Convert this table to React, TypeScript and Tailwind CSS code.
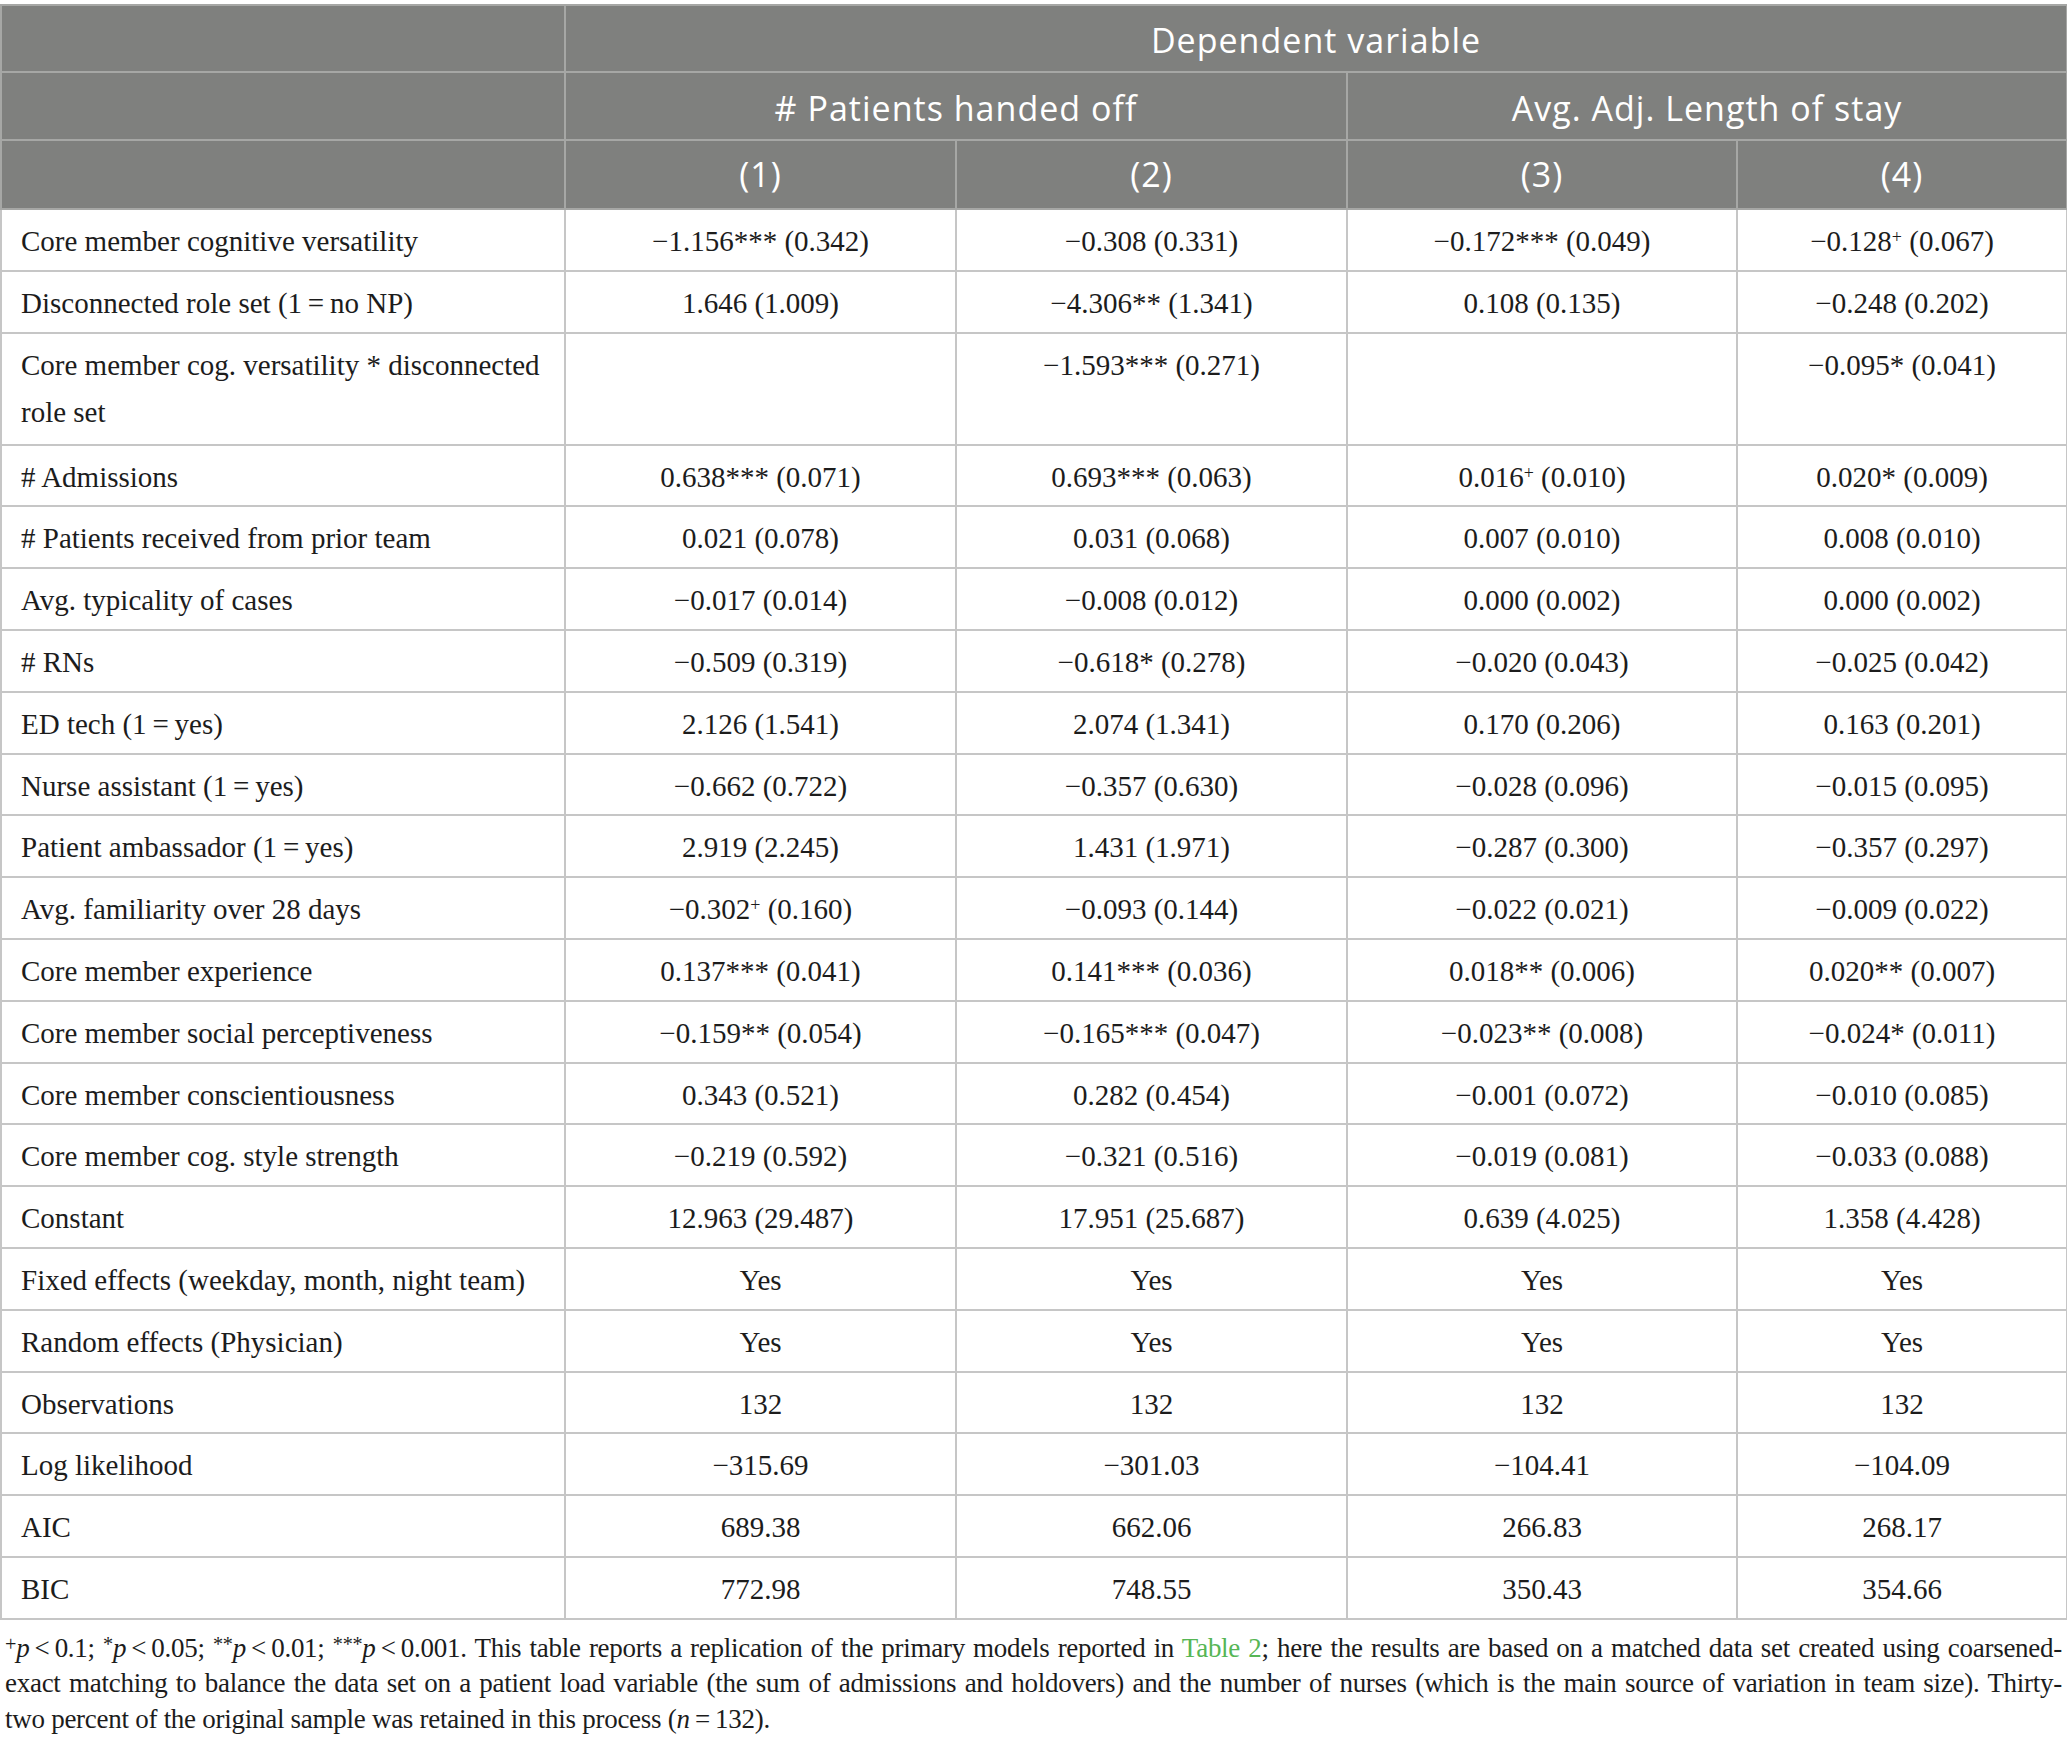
import React from "react";

const M = "\u2212";
const T = "\u2009";

type Cell = React.ReactNode;

const Plus = () => (
  <sup className="relative top-[-0.45em] align-baseline text-[0.62em]">+</sup>
);

const rows: { label: Cell; cells: Cell[]; tall?: boolean }[] = [
  { label: "Core member cognitive versatility", cells: [`${M}1.156*** (0.342)`, `${M}0.308 (0.331)`, `${M}0.172*** (0.049)`, <>{M}0.128<Plus /> (0.067)</>] },
  { label: <>Disconnected role set (1{T}={T}no NP)</>, cells: ["1.646 (1.009)", `${M}4.306** (1.341)`, "0.108 (0.135)", `${M}0.248 (0.202)`] },
  { label: "Core member cog. versatility * disconnected role set", cells: ["", `${M}1.593*** (0.271)`, "", `${M}0.095* (0.041)`], tall: true },
  { label: "# Admissions", cells: ["0.638*** (0.071)", "0.693*** (0.063)", <>0.016<Plus /> (0.010)</>, "0.020* (0.009)"] },
  { label: "# Patients received from prior team", cells: ["0.021 (0.078)", "0.031 (0.068)", "0.007 (0.010)", "0.008 (0.010)"] },
  { label: "Avg. typicality of cases", cells: [`${M}0.017 (0.014)`, `${M}0.008 (0.012)`, "0.000 (0.002)", "0.000 (0.002)"] },
  { label: "# RNs", cells: [`${M}0.509 (0.319)`, `${M}0.618* (0.278)`, `${M}0.020 (0.043)`, `${M}0.025 (0.042)`] },
  { label: <>ED tech (1{T}={T}yes)</>, cells: ["2.126 (1.541)", "2.074 (1.341)", "0.170 (0.206)", "0.163 (0.201)"] },
  { label: <>Nurse assistant (1{T}={T}yes)</>, cells: [`${M}0.662 (0.722)`, `${M}0.357 (0.630)`, `${M}0.028 (0.096)`, `${M}0.015 (0.095)`] },
  { label: <>Patient ambassador (1{T}={T}yes)</>, cells: ["2.919 (2.245)", "1.431 (1.971)", `${M}0.287 (0.300)`, `${M}0.357 (0.297)`] },
  { label: "Avg. familiarity over 28 days", cells: [<>{M}0.302<Plus /> (0.160)</>, `${M}0.093 (0.144)`, `${M}0.022 (0.021)`, `${M}0.009 (0.022)`] },
  { label: "Core member experience", cells: ["0.137*** (0.041)", "0.141*** (0.036)", "0.018** (0.006)", "0.020** (0.007)"] },
  { label: "Core member social perceptiveness", cells: [`${M}0.159** (0.054)`, `${M}0.165*** (0.047)`, `${M}0.023** (0.008)`, `${M}0.024* (0.011)`] },
  { label: "Core member conscientiousness", cells: ["0.343 (0.521)", "0.282 (0.454)", `${M}0.001 (0.072)`, `${M}0.010 (0.085)`] },
  { label: "Core member cog. style strength", cells: [`${M}0.219 (0.592)`, `${M}0.321 (0.516)`, `${M}0.019 (0.081)`, `${M}0.033 (0.088)`] },
  { label: "Constant", cells: ["12.963 (29.487)", "17.951 (25.687)", "0.639 (4.025)", "1.358 (4.428)"] },
  { label: "Fixed effects (weekday, month, night team)", cells: ["Yes", "Yes", "Yes", "Yes"] },
  { label: "Random effects (Physician)", cells: ["Yes", "Yes", "Yes", "Yes"] },
  { label: "Observations", cells: ["132", "132", "132", "132"] },
  { label: "Log likelihood", cells: [`${M}315.69`, `${M}301.03`, `${M}104.41`, `${M}104.09`] },
  { label: "AIC", cells: ["689.38", "662.06", "266.83", "268.17"] },
  { label: "BIC", cells: ["772.98", "748.55", "350.43", "354.66"] },
];

const P = () => <i>p</i>;
const Sp = ({ c }: { c: string }) => (
  <sup className="relative top-[-0.3em] align-baseline text-[0.75em]">{c}</sup>
);

export default function App() {
  const th =
    "border-2 border-[#a6a7a5] bg-[#7f807e] text-white font-normal text-center align-middle";
  const td =
    "border-2 border-[#c6c6c6] align-top pt-[8px] pb-[4px] leading-[47.8px] text-center";
  return (
    <div className="w-[2067px] bg-white pt-[4px]" style={{ fontFamily: '"Liberation Serif", serif' }}>
      <table className="w-[2066px] table-fixed border-collapse text-[#1c1c1c] text-[29px]">
        <colgroup>
          <col className="w-[564px]" />
          <col className="w-[391px]" />
          <col className="w-[391px]" />
          <col className="w-[390px]" />
          <col className="w-[330px]" />
        </colgroup>
        <thead className="font-['Open_Sans',sans-serif] text-[34px] tracking-[0.03em]">
          <tr className="h-[67px]">
            <th className={th}></th>
            <th className={`${th} pt-[4px]`} colSpan={4}>
              Dependent variable
            </th>
          </tr>
          <tr className="h-[68px]">
            <th className={th}></th>
            <th className={`${th} pt-[4px]`} colSpan={2}>
              # Patients handed off
            </th>
            <th className={`${th} pt-[4px]`} colSpan={2}>
              Avg. Adj. Length of stay
            </th>
          </tr>
          <tr className="h-[69px]">
            <th className={th}></th>
            <th className={th}>(1)</th>
            <th className={th}>(2)</th>
            <th className={th}>(3)</th>
            <th className={th}>(4)</th>
          </tr>
        </thead>
        <tbody>
          {rows.map((r, i) => (
            <tr key={i} className={r.tall ? "h-[112px]" : "h-[61.8px]"}>
              <td className={`${td} !text-left pl-[19px] pr-[12px]`}>{r.label}</td>
              {r.cells.map((c, j) => (
                <td key={j} className={td}>
                  {c}
                </td>
              ))}
            </tr>
          ))}
        </tbody>
      </table>
      <div className="mt-[11px] px-[5px] text-[27px] tracking-[-0.01em] leading-[35.5px] text-[#1c1c1c]">
        <div className="whitespace-nowrap text-justify [text-align-last:justify]">
          <Sp c="+" />
          <P />{T}&lt;{T}0.1; <Sp c="*" />
          <P />{T}&lt;{T}0.05; <Sp c="**" />
          <P />{T}&lt;{T}0.01; <Sp c="***" />
          <P />{T}&lt;{T}0.001. This table reports a replication of the primary models reported in{" "}
          <span className="text-[#56b655]">Table 2</span>; here the results are based on a matched data set created using coarsened-
        </div>
        <div className="whitespace-nowrap text-justify [text-align-last:justify]">
          exact matching to balance the data set on a patient load variable (the sum of admissions and holdovers) and the number of nurses (which is the main source of variation in team size). Thirty-
        </div>
        <div className="whitespace-nowrap">
          two percent of the original sample was retained in this process (<i>n</i>{T}={T}132).
        </div>
      </div>
    </div>
  );
}
